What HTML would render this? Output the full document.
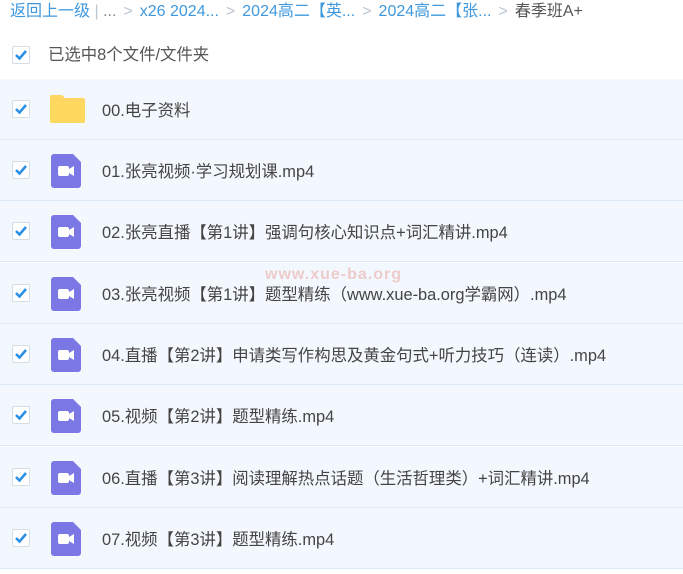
<!DOCTYPE html>
<html><head><meta charset="utf-8"><style>
body{margin:0;width:683px;height:574px;background:#fff;font-family:"Liberation Sans","Noto Sans CJK SC",sans-serif;overflow:hidden;position:relative}
.bc{position:absolute;left:10px;top:2px;font-size:16px;color:#3f98dd;white-space:nowrap;line-height:20px}
.bc .g{color:#bcc6d0;margin:0 7px}
.bc .cur{color:#555}
.cb{position:absolute;left:12px;width:16px;height:16px;border:1px solid #d7dde4;border-radius:2px;background:#fff}
.cb svg{position:absolute;left:1px;top:2px}
.hdr{position:absolute;left:48px;top:45px;font-size:16.4px;color:#555;line-height:20px}
.row{position:absolute;left:0;width:683px;height:61px;background:#f3f8fe;border-bottom:1px solid #dbe8f5;box-sizing:border-box}
.row .t{position:absolute;left:102px;top:22px;font-size:16.4px;color:#444;white-space:nowrap;line-height:20px}
.row .cb{top:21px}
.vid{position:absolute;left:51px;top:14px;width:30px;height:34px}
.fold{position:absolute;left:49px;top:15px}
</style></head><body>
<div class="bc">返回上一级<span style="color:#bcc6d0"> | </span><span style="color:#888">...</span><span class="g">&gt;</span>x26 2024...<span class="g">&gt;</span>2024高二【英...<span class="g">&gt;</span>2024高二【张...<span class="g">&gt;</span><span class="cur">春季班A+</span></div>
<div class="cb" style="top:46px"><svg width="14" height="12" viewBox="0 0 14 12"><path d="M2 6l3.5 3.5L12 2" stroke="#2b8fe6" stroke-width="2.6" fill="none"/></svg></div>
<div class="hdr">已选中8个文件/文件夹</div>

<div class="row" style="top:79px"><div class="cb"><svg width="14" height="12" viewBox="0 0 14 12"><path d="M2 6l3.5 3.5L12 2" stroke="#2b8fe6" stroke-width="2.6" fill="none"/></svg></div>
<svg class="fold" width="37" height="30" viewBox="0 0 37 30"><path d="M1 3a2 2 0 0 1 2-2h10l3 3h18a2 2 0 0 1 2 2v21a2 2 0 0 1-2 2H3a2 2 0 0 1-2-2z" fill="#fcd563"/><path d="M1 8h35v19a2 2 0 0 1-2 2H3a2 2 0 0 1-2-2z" fill="#fdd95e"/></svg>
<div class="t">00.电子资料</div></div>

<div class="row" style="top:140px"><div class="cb"><svg width="14" height="12" viewBox="0 0 14 12"><path d="M2 6l3.5 3.5L12 2" stroke="#2b8fe6" stroke-width="2.6" fill="none"/></svg></div>
<svg class="vid" viewBox="0 0 30 34"><path d="M3 0h19l8 8v23a3 3 0 0 1-3 3H3a3 3 0 0 1-3-3V3a3 3 0 0 1 3-3z" fill="#7b78e6"/><rect x="7" y="12" width="11" height="10" rx="2" fill="#fff"/><path d="M18 15l5-3v10l-5-3z" fill="#fff"/></svg>
<div class="t">01.张亮视频·学习规划课.mp4</div></div>

<div class="row" style="top:201px"><div class="cb"><svg width="14" height="12" viewBox="0 0 14 12"><path d="M2 6l3.5 3.5L12 2" stroke="#2b8fe6" stroke-width="2.6" fill="none"/></svg></div>
<svg class="vid" viewBox="0 0 30 34"><path d="M3 0h19l8 8v23a3 3 0 0 1-3 3H3a3 3 0 0 1-3-3V3a3 3 0 0 1 3-3z" fill="#7b78e6"/><rect x="7" y="12" width="11" height="10" rx="2" fill="#fff"/><path d="M18 15l5-3v10l-5-3z" fill="#fff"/></svg>
<div class="t">02.张亮直播【第1讲】强调句核心知识点+词汇精讲.mp4</div></div>

<div class="row" style="top:263px"><div class="cb"><svg width="14" height="12" viewBox="0 0 14 12"><path d="M2 6l3.5 3.5L12 2" stroke="#2b8fe6" stroke-width="2.6" fill="none"/></svg></div>
<svg class="vid" viewBox="0 0 30 34"><path d="M3 0h19l8 8v23a3 3 0 0 1-3 3H3a3 3 0 0 1-3-3V3a3 3 0 0 1 3-3z" fill="#7b78e6"/><rect x="7" y="12" width="11" height="10" rx="2" fill="#fff"/><path d="M18 15l5-3v10l-5-3z" fill="#fff"/></svg>
<div style="position:absolute;left:265px;top:3px;font-size:16px;font-weight:bold;color:rgba(230,120,110,.35);letter-spacing:1px">www.xue-ba.org</div>
<div class="t">03.张亮视频【第1讲】题型精练（www.xue-ba.org学霸网）.mp4</div></div>

<div class="row" style="top:324px"><div class="cb"><svg width="14" height="12" viewBox="0 0 14 12"><path d="M2 6l3.5 3.5L12 2" stroke="#2b8fe6" stroke-width="2.6" fill="none"/></svg></div>
<svg class="vid" viewBox="0 0 30 34"><path d="M3 0h19l8 8v23a3 3 0 0 1-3 3H3a3 3 0 0 1-3-3V3a3 3 0 0 1 3-3z" fill="#7b78e6"/><rect x="7" y="12" width="11" height="10" rx="2" fill="#fff"/><path d="M18 15l5-3v10l-5-3z" fill="#fff"/></svg>
<div class="t">04.直播【第2讲】申请类写作构思及黄金句式+听力技巧（连读）.mp4</div></div>

<div class="row" style="top:385px"><div class="cb"><svg width="14" height="12" viewBox="0 0 14 12"><path d="M2 6l3.5 3.5L12 2" stroke="#2b8fe6" stroke-width="2.6" fill="none"/></svg></div>
<svg class="vid" viewBox="0 0 30 34"><path d="M3 0h19l8 8v23a3 3 0 0 1-3 3H3a3 3 0 0 1-3-3V3a3 3 0 0 1 3-3z" fill="#7b78e6"/><rect x="7" y="12" width="11" height="10" rx="2" fill="#fff"/><path d="M18 15l5-3v10l-5-3z" fill="#fff"/></svg>
<div class="t">05.视频【第2讲】题型精练.mp4</div></div>

<div class="row" style="top:447px"><div class="cb"><svg width="14" height="12" viewBox="0 0 14 12"><path d="M2 6l3.5 3.5L12 2" stroke="#2b8fe6" stroke-width="2.6" fill="none"/></svg></div>
<svg class="vid" viewBox="0 0 30 34"><path d="M3 0h19l8 8v23a3 3 0 0 1-3 3H3a3 3 0 0 1-3-3V3a3 3 0 0 1 3-3z" fill="#7b78e6"/><rect x="7" y="12" width="11" height="10" rx="2" fill="#fff"/><path d="M18 15l5-3v10l-5-3z" fill="#fff"/></svg>
<div class="t">06.直播【第3讲】阅读理解热点话题（生活哲理类）+词汇精讲.mp4</div></div>

<div class="row" style="top:508px"><div class="cb"><svg width="14" height="12" viewBox="0 0 14 12"><path d="M2 6l3.5 3.5L12 2" stroke="#2b8fe6" stroke-width="2.6" fill="none"/></svg></div>
<svg class="vid" viewBox="0 0 30 34"><path d="M3 0h19l8 8v23a3 3 0 0 1-3 3H3a3 3 0 0 1-3-3V3a3 3 0 0 1 3-3z" fill="#7b78e6"/><rect x="7" y="12" width="11" height="10" rx="2" fill="#fff"/><path d="M18 15l5-3v10l-5-3z" fill="#fff"/></svg>
<div class="t">07.视频【第3讲】题型精练.mp4</div></div>
</body></html>
